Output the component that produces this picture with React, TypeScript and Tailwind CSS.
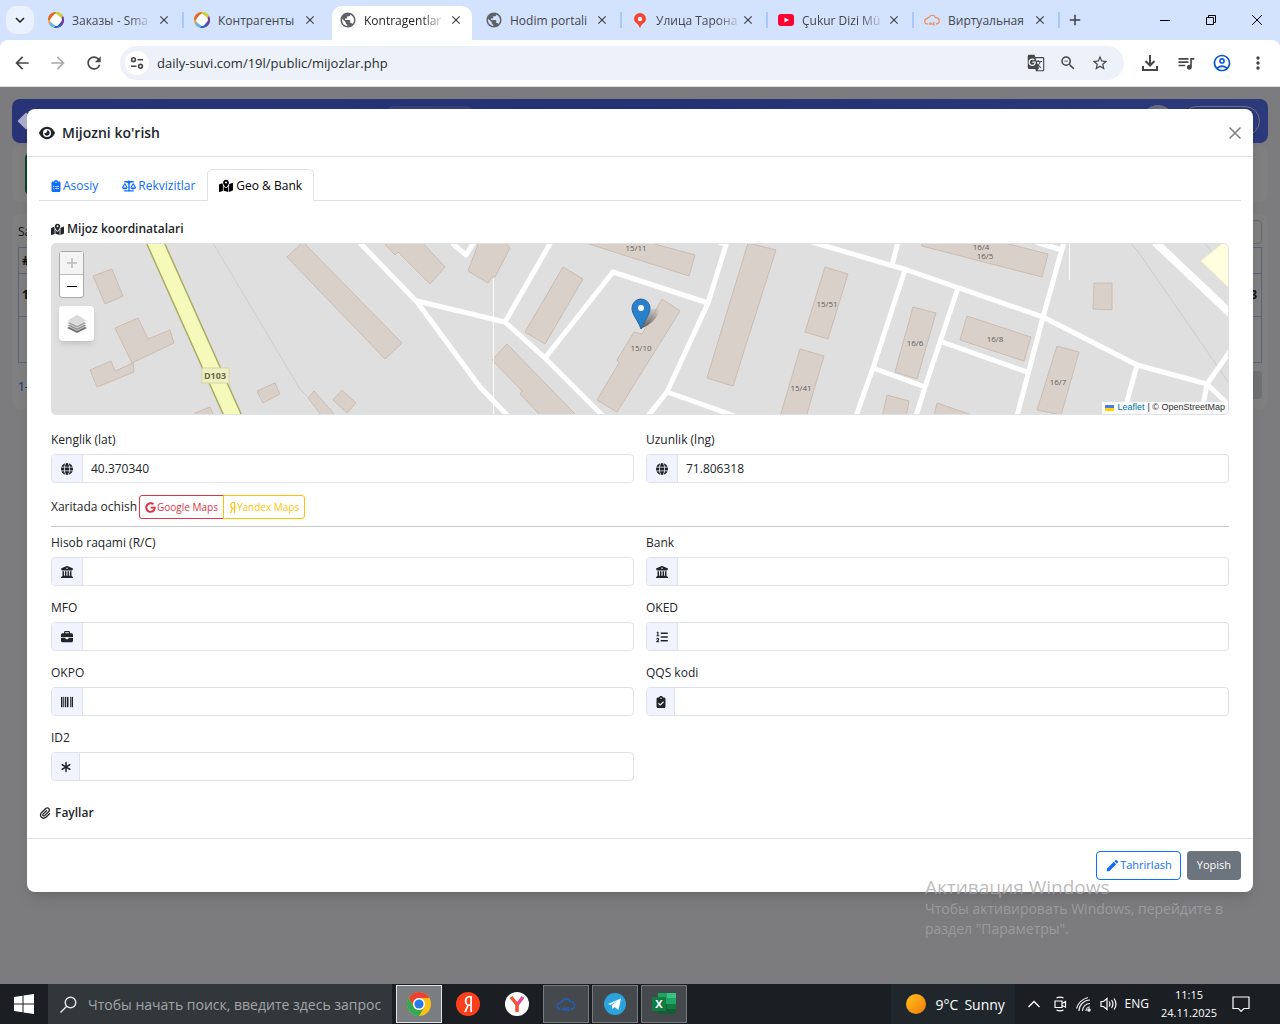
import type { ComponentType, ReactNode } from "react";
import {
  FaAsterisk,
  FaBarcode,
  FaBriefcase,
  FaBuildingColumns,
  FaClipboardCheck,
  FaClipboardList,
  FaEye,
  FaGlobe,
  FaGoogle,
  FaListOl,
  FaMapLocationDot,
  FaPaperclip,
  FaScaleBalanced,
  FaYandex,
} from "react-icons/fa6";
import {
  MdAdd,
  MdArrowBack,
  MdArrowForward,
  MdClose,
  MdEdit,
  MdGTranslate,
  MdKeyboardArrowDown,
  MdMoreVert,
  MdOutlineAccountCircle,
  MdPublic,
  MdQueueMusic,
  MdRefresh,
  MdStarBorder,
  MdZoomOut,
} from "react-icons/md";

type Icon = ComponentType<{ className?: string }>;

/* ── Browser chrome ─────────────────────────────────────────── */

function RingIcon() {
  return (
    <svg viewBox="0 0 16 16" className="h-4 w-4 shrink-0">
      <circle cx="8" cy="8" r="8" fill="#f3a32d" />
      <path d="M8 0a8 8 0 0 0-8 8l4 0 4-5z" fill="#e0662c" />
      <path d="M8 0a8 8 0 0 1 7 4l-3 3-5-5z" fill="#c9d23c" />
      <path d="M15 4a8 8 0 0 1-3 11l-2-3 3-5z" fill="#6a3fa8" />
      <path d="M13 14a8 8 0 0 1-7 1.8L8 12l4 0z" fill="#2a62c9" />
      <path d="M6 15.800a8 8 0 0 1-5-4l3-2 4 3z" fill="#5fb6e8" />
      <rect x="3" y="3" width="10" height="10" rx="3" fill="#fff" transform="rotate(40 8 8)" />
    </svg>
  );
}

function GlobeIcon() {
  return <MdPublic className="-m-px h-[18px] w-[18px] shrink-0 text-[#5f6368]" />;
}

function PinIcon() {
  return (
    <svg viewBox="0 0 16 16" className="h-4 w-4 shrink-0">
      <path d="M8 1a6 6 0 0 0-6 6c0 4 5 4.500 5.500 8.500h1C9 11.500 14 11 14 7a6 6 0 0 0-6-6z" fill="#f8432f" />
      <circle cx="8" cy="7" r="2.200" fill="#fff" />
    </svg>
  );
}

function PlayIcon() {
  return (
    <svg viewBox="0 0 16 16" className="h-4 w-4 shrink-0">
      <rect y="2" width="16" height="12" rx="3" fill="#f03" />
      <path d="M6.500 5.500v5L11 8z" fill="#fff" />
    </svg>
  );
}

function CloudIcon({ className }: { className?: string }) {
  return (
    <svg viewBox="0 0 18 14" className={className} fill="none" stroke="currentColor" strokeWidth="1.300">
      <path d="M4.500 11.500H4a3 3 0 0 1-.4-6A3 3 0 0 1 6 3.800a3.600 3.600 0 0 1 6.800.6 3.400 3.400 0 0 1 1.400 7h-.7" />
      <path d="M6 10v2.500M7.500 12.500V10l1.500 2.500V10M12.500 10h-2v2.500h2" strokeWidth="1" />
    </svg>
  );
}

const browserTabs: { title: string; icon: ReactNode; active?: boolean; faded?: boolean }[] = [
  { title: "Заказы - Sma", icon: <RingIcon />, faded: true },
  { title: "Контрагенты", icon: <RingIcon /> },
  { title: "Kontragentlar", icon: <GlobeIcon />, active: true, faded: true },
  { title: "Hodim portali", icon: <GlobeIcon /> },
  { title: "Улица Тарона", icon: <PinIcon />, faded: true },
  { title: "Çukur Dizi Mü", icon: <PlayIcon />, faded: true },
  { title: "Виртуальная", icon: <CloudIcon className="h-4 w-4 shrink-0 text-[#f28b50]" /> },
];

function TabStrip() {
  return (
    <div className="flex h-10 bg-[#d3e2fd]">
      <button aria-label="Search tabs" className="m-[6px] flex h-7 w-7 items-center justify-center rounded-[10px] bg-[#e9f0fe]">
        <MdKeyboardArrowDown className="h-[18px] w-[18px] text-[#1f1f1f]" />
      </button>
      <div className="flex min-w-0 pt-[6px]">
        {browserTabs.map((tab, i) => (
          <div key={tab.title} className="flex">
            <div
              className={
                tab.active
                  ? "flex h-[34px] w-[140px] items-center rounded-t-[10px] bg-white pb-[6px] pl-2 pr-[9px]"
                  : "flex h-[34px] w-[140px] items-center pb-[6px] pl-2 pr-[9px]"
              }
            >
              {tab.icon}
              <span
                className={`ml-2 whitespace-nowrap pt-px text-[12px] ${tab.active ? "text-[#1f1f1f]" : "text-[#44474b]"} ${tab.faded ? "[mask-image:linear-gradient(to_right,black_75%,#0003)]" : ""}`}
              >
                {tab.title}
              </span>
              <button aria-label={`Close ${tab.title}`} className="ml-auto">
                <MdClose className="h-[14px] w-[14px] stroke-current text-[#3c4043]" />
              </button>
            </div>
            <div className="flex w-[6px] justify-center pt-[6px]">
              {i !== 1 && i !== 2 && <div className="h-4 w-[2px] bg-[#a8c7fa]" />}
            </div>
          </div>
        ))}
        <button aria-label="New tab" className="mb-[6px] ml-1">
          <MdAdd className="h-[18px] w-[18px] text-[#3c4043]" />
        </button>
      </div>
      <div className="ml-auto flex items-center text-black">
        <button aria-label="Minimize" className="flex w-[46px] justify-center">
          <svg viewBox="0 0 10 10" className="h-[10px] w-[10px]" stroke="currentColor"><path d="M0 5.500h10" /></svg>
        </button>
        <button aria-label="Restore" className="flex w-[46px] justify-center">
          <svg viewBox="0 0 10 10" className="h-[10px] w-[10px]" fill="none" stroke="currentColor">
            <path d="M.5 2.500h7v7h-7zM2.500 2.500v-2h7v7h-2" />
          </svg>
        </button>
        <button aria-label="Close window" className="flex w-[46px] justify-center">
          <svg viewBox="0 0 10 10" className="h-[10px] w-[10px]" stroke="currentColor"><path d="M0 0l10 10M10 0L0 10" /></svg>
        </button>
      </div>
    </div>
  );
}

function Toolbar() {
  return (
    <div className="bg-[#d3e2fd]">
      <div className="flex h-[47px] items-center rounded-t-lg border-b border-[#dcdfe3] bg-white pl-3 pr-3 text-[#474747]">
        <div className="flex gap-4">
          <button aria-label="Back"><MdArrowBack className="h-5 w-5" /></button>
          <button aria-label="Forward"><MdArrowForward className="h-5 w-5 text-[#a9abad]" /></button>
          <button aria-label="Reload"><MdRefresh className="h-5 w-5" /></button>
        </div>
        <div className="ml-4 flex h-[34px] flex-1 items-center rounded-full bg-[#ecf1fa] pl-[5px] pr-[15px]">
          <span className="flex h-6 w-6 shrink-0 items-center justify-center rounded-full bg-white">
            <svg viewBox="0 0 14 14" className="h-[14px] w-[14px]" fill="none" stroke="currentColor" strokeWidth="1.600">
              <circle cx="3.500" cy="3.700" r="1.900" />
              <path d="M7.500 3.700H13M1 10.300h5.500" />
              <circle cx="10.500" cy="10.300" r="1.900" />
            </svg>
          </span>
          <input
            aria-label="Address"
            readOnly
            value="daily-suvi.com/19l/public/mijozlar.php"
            className="ml-2 min-w-0 flex-1 bg-transparent pt-px text-[13px] text-[#2a2c2f] outline-none"
          />
          <div className="flex gap-[14px]">
            <button aria-label="Translate"><MdGTranslate className="h-[18px] w-[18px]" /></button>
            <button aria-label="Zoom"><MdZoomOut className="h-[18px] w-[18px]" /></button>
            <button aria-label="Bookmark"><MdStarBorder className="h-[18px] w-[18px]" /></button>
          </div>
        </div>
        <div className="ml-4 flex items-center gap-4">
          <button aria-label="Downloads">
            <svg viewBox="0 0 20 20" className="h-5 w-5" fill="none" stroke="currentColor" strokeWidth="2">
              <path d="M10 2v10M5.500 8l4.500 4.500L14.500 8M3 13v4h14v-4" />
            </svg>
          </button>
          <button aria-label="Media"><MdQueueMusic className="h-5 w-5" /></button>
          <button aria-label="Profile"><MdOutlineAccountCircle className="h-5 w-5 text-[#0b57d0]" /></button>
          <button aria-label="Menu"><MdMoreVert className="h-5 w-5" /></button>
        </div>
      </div>
    </div>
  );
}

/* ── Page behind the dialog ─────────────────────────────────── */

function ClientsPage() {
  return (
    <div className="bg-[#f8f9ff] px-3 pt-3 text-[12px] text-[#212529] [grid-area:1/1]">
      <header className="flex h-11 items-center overflow-hidden rounded-lg bg-linear-to-r from-[#5268f0] via-[#4764e8] to-[#5874f8] px-2">
        <div className="flex w-[30%] items-center justify-between">
          <span className="h-3 w-3 rotate-45 bg-white/60" />
          <span className="-mr-20 h-[30px] w-[85px] rounded-md bg-white/20" />
        </div>
        <div className="ml-auto flex items-center gap-2">
          <span className="h-8 w-8 rounded-full bg-white/70" />
          <span className="h-[30px] w-[78px] rounded-full border border-white/80" />
        </div>
      </header>
      <div className="mt-[3px] h-14 rounded-lg bg-white px-[13px] py-2">
        <div className="h-10 w-10 rounded bg-[#198754]" />
      </div>
      <div className="mt-3 rounded-lg bg-white px-[6px] pb-2 pt-[6px]">
        <div className="flex h-6 items-center justify-between">
          <span>Sahifada</span>
          <span className="h-6 w-40 rounded border border-[#ced4da]" />
        </div>
        <table className="mt-[3px] w-full border border-[#b6c8f5] font-bold">
          <tbody>
            <tr className="h-[26px] border-b border-[#b6c8f5]"><td className="pl-[3px]">#</td><td /></tr>
            <tr className="h-[43px] border-b border-[#b6c8f5]"><td className="pl-[3px]">1</td><td className="pr-1 text-right">3</td></tr>
            <tr className="h-[46px]"><td /><td /></tr>
          </tbody>
        </table>
        <div className="mt-[6px] flex h-8 items-center justify-between">
          <span className="pt-1 text-[#0d6efd]">1-1</span>
          <span className="h-7 w-20 rounded bg-[#dee2e6]" />
        </div>
      </div>
    </div>
  );
}

/* ── Map ────────────────────────────────────────────────────── */

const buildings = [
  "93,276 112,269 123,296 105,304",
  "115,328 138,318 148,339 170,330 174,343 132,363",
  "90,370 111,361 115,371 133,363 134,372 97,387",
  "257,391 275,383 280,394 263,403",
  "195,413 210,407 214,416 195,420",
  "287,257 303,242 402,343 385,359",
  "333,400 342,390 356,403 347,413",
  "308,398 314,391 336,416 322,416",
  "383,242 395,255 398,252 430,284 445,267 422,242",
  "479,242 468,271 488,283 493,276 495,277 510,248 505,242",
  "563,267 583,279 545,344 525,332",
  "507,344 492,360 522,391 520,394 541,416 577,416",
  "662,299 680,311 617,412 597,400 619,363 617,360 634,332 642,334",
  "580,241 640,240 695,255 689,276",
  "748,243 776,250 733,386 707,378",
  "825,267 848,274 828,339 805,332",
  "800,349 824,356 806,417 780,417",
  "913,307 936,313 917,379 895,372",
  "887,395 909,401 906,417 882,417",
  "937,403 975,416 934,416",
  "967,316 1031,337 1024,361 960,340",
  "920,238 985,238 1048,254 1042,277 922,246",
  "1057,346 1079,352 1061,415 1037,410",
  "1094,283 1112,283 1112,310 1093,309",
];

const roads = [
  "360,243 417,302 480,387 508,416",
  "417,301 505,322 545,358 603,416",
  "551,242 505,322",
  "545,358 613,272 708,303",
  "715,240 726,245 708,303 667,392 648,416",
  "667,392 735,416",
  "452,243 466,255 474,242",
  "812,242 907,270 1043,317 1137,365 1207,384 1231,407",
  "898,242 892,265",
  "905,270 873,368 856,416",
  "958,288 925,387 916,416",
  "873,368 925,387",
  "942,342 1027,372",
  "1064,242 1043,317 1017,416",
  "1036,242 1062,250",
  "1137,365 1123,416",
  "1207,384 1201,416",
  "1207,384 1231,350",
];

const houseNumbers = [
  { label: "15/11", x: 636, y: 251 },
  { label: "15/10", x: 641, y: 351 },
  { label: "15/51", x: 827, y: 307 },
  { label: "15/41", x: 801, y: 391 },
  { label: "16/6", x: 915, y: 346 },
  { label: "16/4", x: 981, y: 250 },
  { label: "16/5", x: 985, y: 259 },
  { label: "16/8", x: 995, y: 342 },
  { label: "16/7", x: 1058, y: 385 },
];

function ClientMap() {
  return (
    <div className="relative h-[172px] overflow-hidden rounded-[5px] border border-[#dee2e6] bg-[#dfdfdf]">
      <svg viewBox="52 244 1176 170" preserveAspectRatio="xMidYMid slice" className="h-full w-full">
        <defs>
          <linearGradient id="marker-shadow" x1="0" y1="1" x2="1" y2="0">
            <stop offset="0" stopColor="#000" stopOpacity=".65" />
            <stop offset="1" stopColor="#000" stopOpacity="0" />
          </linearGradient>
        </defs>
        <g fill="none" stroke="#cdcdcb">
          <path d="M213 243L300 389L308 397M1130 243L1137 250L1229 383M1204 243L1224 264" />
        </g>
        <g fill="#d9d0c9" stroke="#ccbcb1">
          {buildings.map((points) => <polygon key={points} points={points} />)}
        </g>
        <g fill="none" stroke="#fff" strokeWidth="5" strokeLinejoin="round">
          {roads.map((points) => <polyline key={points} points={points} />)}
          <path d="M1155 242L1231 314" strokeWidth="8" />
          <path d="M493.500 279V415M1069.500 243V280" strokeWidth="1" />
        </g>
        <path d="M146 242L164 242L242 416L224 416z" fill="#f5f9b9" stroke="#a9ad63" strokeWidth="1.500" />
        <path d="M1201 261L1224 242H1230V289z" fill="#ffffe0" stroke="#f2f2c0" />
        <rect x="202" y="368" width="27" height="15" fill="#eef0c4" stroke="#d4d8a0" />
        <text x="215" y="379" textAnchor="middle" className="fill-[#6b6b45] text-[9px] font-bold">D103</text>
        {houseNumbers.map((n) => (
          <text key={n.label} x={n.x} y={n.y} textAnchor="middle" className="fill-[#606060] text-[8px]">{n.label}</text>
        ))}
        {/* marker and its shadow */}
        <path d="M641 329L649 311C655 306 662 309 657 316C653 323 646 326 641 329z" fill="url(#marker-shadow)" />
        <path d="M641 329C638 320 632 315 632 308a9 9 0 0 1 18 0C650 315 644 320 641 329z" fill="#2a81cb" stroke="#2268a6" />
        <circle cx="641" cy="308" r="3" fill="#fff" />
      </svg>
      <div className="absolute left-[7px] top-[7px] flex w-[25px] flex-col rounded-[3px] border border-[#a9a9a9] bg-white text-black">
        <button aria-label="Zoom in" disabled className="flex h-[23px] items-center justify-center border-b border-[#bbb] bg-[#f4f4f4] text-[#bbb]">
          <svg viewBox="0 0 12 12" className="h-3 w-3" stroke="currentColor" strokeWidth="1.500"><path d="M1 6h10M6 1v10" /></svg>
        </button>
        <button aria-label="Zoom out" className="flex h-[22px] items-center justify-center">
          <svg viewBox="0 0 12 12" className="h-3 w-3" stroke="currentColor"><path d="M1 6.500h10" /></svg>
        </button>
      </div>
      <button aria-label="Layers" className="absolute left-[7px] top-[62px] flex h-[35px] w-[35px] items-center justify-center rounded-[4px] bg-white shadow-md">
        <svg viewBox="0 0 24 24" className="h-6 w-6">
          <path d="M2 16l10 5 10-5-10-5z" fill="#707070" />
          <path d="M2 13.500l10 5 10-5-10-5z" fill="#909090" stroke="#fff" strokeWidth=".6" />
          <path d="M2 11l10 5 10-5-10-5z" fill="#a0a0a0" stroke="#fff" strokeWidth=".6" />
          <path d="M2 8.500l10 5 10-5-10-6z" fill="#dadada" stroke="#fff" strokeWidth=".6" />
        </svg>
      </button>
      <div className="absolute bottom-0 right-0 flex h-3 items-center gap-[3px] bg-white/80 px-[3px] font-['Liberation_Sans',sans-serif] text-[9px] text-[#333]">
        <svg viewBox="0 0 9 6" className="h-[6px] w-[9px]">
          <path d="M0 0h9v3H0z" fill="#4c7be1" />
          <path d="M0 3h9v3H0z" fill="#ffd500" />
        </svg>
        <a href="#leaflet" className="text-[#0078a8]">Leaflet</a>
        <span>| © OpenStreetMap</span>
      </div>
    </div>
  );
}

/* ── Dialog ─────────────────────────────────────────────────── */

const tabs: { label: string; icon: Icon; active?: boolean }[] = [
  { label: "Asosiy", icon: FaClipboardList },
  { label: "Rekvizitlar", icon: FaScaleBalanced },
  { label: "Geo & Bank", icon: FaMapLocationDot, active: true },
];

type FieldProps = { id: string; label: string; icon: Icon; value?: string; narrow?: boolean };

const bankFields: FieldProps[] = [
  { id: "account", label: "Hisob raqami (R/C)", icon: FaBuildingColumns },
  { id: "bank", label: "Bank", icon: FaBuildingColumns },
  { id: "mfo", label: "MFO", icon: FaBriefcase },
  { id: "oked", label: "OKED", icon: FaListOl },
  { id: "okpo", label: "OKPO", icon: FaBarcode },
  { id: "qqs", label: "QQS kodi", icon: FaClipboardCheck, narrow: true },
  { id: "id2", label: "ID2", icon: FaAsterisk, narrow: true },
];

function Field({ id, label, icon: FieldIcon, value = "", narrow }: FieldProps) {
  return (
    <div>
      <label htmlFor={id} className="mb-[5px] block leading-[18px]">{label}</label>
      <div className="flex h-[29px] overflow-hidden rounded-[4px] border border-[#dee2e6]">
        <span className={`flex items-center justify-center border-r border-[#dee2e6] bg-[#f1f4ff] ${narrow ? "w-7" : "w-[31px]"}`}>
          <FieldIcon className="h-3 w-3" />
        </span>
        <input id={id} defaultValue={value} className="min-w-0 flex-1 px-2 pt-px outline-none" />
      </div>
    </div>
  );
}

function ClientDialog() {
  return (
    <div role="dialog" aria-labelledby="dialog-title" className="rounded-lg bg-white text-[12px] text-[#212529] shadow-lg">
      <div className="flex h-12 items-center border-b border-[#dee2e6] px-3">
        <FaEye className="h-4 w-4" />
        <h5 id="dialog-title" className="ml-[7px] text-[14px] font-semibold">Mijozni ko'rish</h5>
        <button aria-label="Close" className="ml-auto text-[#7d7d7d]">
          <svg viewBox="0 0 12 12" className="h-3 w-3" stroke="currentColor" strokeWidth="1.500"><path d="M.5 .5l11 11M11.500 .5l-11 11" /></svg>
        </button>
      </div>

      <div className="px-3 pt-3">
        <div role="tablist" className="flex border-b border-[#dee2e6]">
          {tabs.map(({ label, icon: TabIcon, active }) => (
            <button
              key={label}
              role="tab"
              aria-selected={!!active}
              className={
                active
                  ? "-mb-px flex h-8 items-center gap-[3px] rounded-t-[5px] border border-b-white border-[#dee2e6] bg-white px-[11px] pt-[2px] text-black"
                  : "-mb-px flex h-8 items-center gap-[2px] border border-transparent px-[11px] pt-[2px] text-[#0d6efd]"
              }
            >
              <TabIcon className={label === "Asosiy" ? "h-3 w-[10px]" : "h-[14px] w-[14px]"} />
              {label}
            </button>
          ))}
        </div>

        <div className="px-3 pt-[19px]">
          <h6 className="mb-[5px] flex items-center gap-[3px] font-semibold leading-[18px]">
            <FaMapLocationDot className="h-[13px] w-[13px]" />
            Mijoz koordinatalari
          </h6>
          <ClientMap />

          <div className="mt-4 grid grid-cols-2 gap-3">
            <Field id="lat" label="Kenglik (lat)" icon={FaGlobe} value="40.370340" />
            <Field id="lng" label="Uzunlik (lng)" icon={FaGlobe} value="71.806318" />
          </div>

          <div className="mt-3 flex items-center gap-[2px]">
            <span className="pb-px">Xaritada ochish</span>
            <div className="flex h-6 text-[10px]">
              <a href="#google" className="flex items-center gap-px rounded-l-[3px] border border-[#dc3545] px-[5px] text-[#dc3545]">
                <FaGoogle className="h-[11px] w-[11px]" />
                Google Maps
              </a>
              <a href="#yandex" className="-ml-px flex items-center gap-px rounded-r-[3px] border border-[#ffc107] px-[5px] text-[#ffc107]">
                <FaYandex className="h-[11px] w-[7px]" />
                Yandex Maps
              </a>
            </div>
          </div>

          <hr className="mb-[7px] mt-[7px] border-[#c8c9ca]" />

          <div className="grid grid-cols-2 gap-x-3 gap-y-[13px]">
            {bankFields.map((field) => <Field key={field.id} {...field} />)}
          </div>
        </div>

        <h6 className="mt-[23px] flex items-center gap-1 pb-4 font-semibold leading-[18px]">
          <FaPaperclip className="h-3 w-auto" />
          Fayllar
        </h6>
      </div>

      <div className="flex justify-end gap-[6px] border-t border-[#dee2e6] p-3 text-[11px]">
        <button className="flex h-[29px] items-center rounded-[4px] border border-[#0d6efd] px-2 text-[#0d6efd]">
          <MdEdit className="h-[15px] w-[15px]" />
          Tahrirlash
        </button>
        <button className="h-[29px] rounded-[4px] bg-[#6c757d] px-[10px] text-white">Yopish</button>
      </div>
    </div>
  );
}

function ActivationNotice() {
  return (
    <div className="pointer-events-none absolute bottom-[45px] right-[45px] w-[310px] text-[#a6a6a6]/75">
      <p className="text-[19px] leading-6">Активация Windows</p>
      <p className="text-[14px] leading-5">Чтобы активировать Windows, перейдите в раздел "Параметры".</p>
    </div>
  );
}

/* ── Taskbar ────────────────────────────────────────────────── */

function ChromeLogo() {
  return (
    <svg viewBox="0 0 24 24" className="h-6 w-6">
      <circle cx="12" cy="12" r="12" fill="#fbc116" />
      <path d="M1.600 6A12 12 0 0 1 22.400 6H12a6 6 0 0 0-5.200 9z" fill="#ea4335" />
      <path d="M1.600 6A12 12 0 0 0 12 24l5.200-9A6 6 0 0 1 6.800 15z" fill="#34a853" />
      <circle cx="12" cy="12" r="6" fill="#fff" />
      <circle cx="12" cy="12" r="4.600" fill="#2a78e8" />
    </svg>
  );
}

function TelegramLogo() {
  return (
    <svg viewBox="0 0 22 22" className="h-[22px] w-[22px]">
      <circle cx="11" cy="11" r="11" fill="#2ba3dc" />
      <path d="M4 11l13-5.500-2.500 11.500-4-3-2 2-.8-3.500 6-4.500-7.500 4z" fill="#fff" />
    </svg>
  );
}

function ExcelLogo() {
  return (
    <span className="relative flex h-6 w-6 items-center">
      <svg viewBox="0 0 24 24" className="absolute h-6 w-6">
        <path d="M6 1h9v11H6z" fill="#21a366" />
        <path d="M15 1h9v5h-9z" fill="#33c481" />
        <path d="M15 6h9v6h-9z" fill="#21a366" />
        <path d="M6 12h9v10H6z" fill="#185c37" />
        <path d="M15 12h9v5h-9z" fill="#107c41" />
        <path d="M15 17h9v5h-9z" fill="#185c37" />
      </svg>
      <span className="relative flex h-[14px] w-[14px] items-center justify-center bg-[#107c41] text-[11px] font-bold text-white">X</span>
    </span>
  );
}

function Taskbar() {
  return (
    <footer className="flex h-10 items-center bg-[#1b1e23] text-white">
      <button aria-label="Start" className="flex w-12 shrink-0 justify-center">
        <svg viewBox="0 0 20 20" className="h-5 w-5" fill="#fff">
          <path d="M0 3l8.500-1.200v7.700H0zM9.500 1.600L20 0v9.500H9.500zM0 10.500h8.500v7.700L0 17zM9.500 10.500H20V20l-10.500-1.600z" />
        </svg>
      </button>
      <label className="flex h-full w-[344px] shrink-0 items-center bg-[#32373c] pl-3">
        <svg viewBox="0 0 17 17" className="h-[17px] w-[17px] shrink-0" fill="none" stroke="#e6e6e6" strokeWidth="1.400">
          <circle cx="10.500" cy="6.500" r="5.300" />
          <path d="M6.700 10.300L.5 16.500" />
        </svg>
        <input
          aria-label="Search"
          placeholder="Чтобы начать поиск, введите здесь запрос"
          className="ml-[11px] min-w-0 flex-1 bg-transparent text-[14px] outline-none placeholder:text-[#a3a5a7]"
        />
      </label>
      <div className="ml-1 flex gap-[3px]">
        <button aria-label="Chrome" className="flex h-[38px] w-[46px] items-center justify-center border border-[#e2e3e4] bg-[#7b7e81]"><ChromeLogo /></button>
        <button aria-label="Yandex" className="flex h-[38px] w-[46px] items-center justify-center">
          <span className="flex h-6 w-6 items-center justify-center rounded-full bg-[#fc3f1d]"><FaYandex className="h-4 w-4" /></span>
        </button>
        <button aria-label="Yandex Browser" className="flex h-[38px] w-[46px] items-center justify-center">
          <svg viewBox="0 0 24 24" className="h-6 w-6" fill="none" strokeWidth="3.500">
            <circle cx="12" cy="12" r="12" fill="#fff" />
            <path d="M12 13L18 5" stroke="#e8469b" />
            <path d="M6 5l6 7.500V20" stroke="#f8502f" />
          </svg>
        </button>
        <button aria-label="Cloud" className="flex h-[38px] w-[46px] items-center justify-center border border-[#777a7e] bg-[#45494e]"><CloudIcon className="h-[15px] w-5 text-[#1f5fbf]" /></button>
        <button aria-label="Telegram" className="flex h-[38px] w-[46px] items-center justify-center border border-[#777a7e] bg-[#45494e]"><TelegramLogo /></button>
        <button aria-label="Excel" className="flex h-[38px] w-[46px] items-center justify-center border border-[#777a7e] bg-[#45494e]"><ExcelLogo /></button>
      </div>

      <div className="ml-auto flex h-full items-center pr-[30px]">
        <div className="flex h-full w-[124px] items-center bg-[#20272c] pl-[15px] text-[14px]">
          <span className="mr-[10px] h-5 w-5 rounded-full bg-linear-to-br from-[#ffc21a] to-[#f07a0c]" />
          <span>9°C</span>
          <span className="ml-[6px]">Sunny</span>
        </div>
        <div className="ml-[13px] flex items-center gap-2">
          <svg viewBox="0 0 12 8" className="h-2 w-3" fill="none" stroke="#fff" strokeWidth="1.300"><path d="M.5 7L6 1.500 11.500 7" /></svg>
          <svg viewBox="0 0 16 16" className="ml-[4px] h-4 w-4" fill="none" stroke="#fff" strokeWidth="1.200">
            <path d="M3 5h7v6.500H3zM10 7.500L13.500 5.500v5.500L10 9.500M4.500 2Q8 .2 11.500 2M4.500 14Q8 15.800 11.500 14" />
          </svg>
          <svg viewBox="0 0 16 16" className="h-4 w-4" fill="none" stroke="#e5e5e5" strokeWidth="1.200">
            <path d="M3 15A11 11 0 0 1 14 4M6.500 15A7.500 7.500 0 0 1 14 7.500M10 15a4 4 0 0 1 4-4M.5 12.500Q3 4 12 1.500" />
            <circle cx="13" cy="14" r="1.200" fill="#fff" />
          </svg>
          <svg viewBox="0 0 17 16" className="h-4 w-[17px]" fill="none" stroke="#fff" strokeWidth="1.200">
            <path d="M1 5.500h2.500L7 2.500v11L3.500 10.500H1zM9 5.500q2 2.500 0 5M11.500 4q3 4 0 8M14 2.500q4 5.500 0 11" />
          </svg>
          <span className="text-[12px]">ENG</span>
        </div>
        <div className="ml-[9px] w-[62px] text-center text-[11px] leading-[18px]">
          <div>11:15</div>
          <div>24.11.2025</div>
        </div>
        <svg viewBox="0 0 18 16" className="ml-3 h-4 w-[18px]" fill="none" stroke="#fff" strokeWidth="1.200">
          <path d="M1 1h16v11.500h-5L9 15.300 6.500 12.500H1z" />
        </svg>
      </div>
    </footer>
  );
}

export default function App() {
  return (
    <div className="flex min-h-screen flex-col font-['Open_Sans','Noto_Sans',sans-serif]">
      <TabStrip />
      <Toolbar />
      <main className="relative grid flex-1">
        <ClientsPage />
        <div className="bg-black/50 px-[27px] pb-10 pt-[22px] [grid-area:1/1]">
          <ClientDialog />
        </div>
        <ActivationNotice />
      </main>
      <Taskbar />
    </div>
  );
}
